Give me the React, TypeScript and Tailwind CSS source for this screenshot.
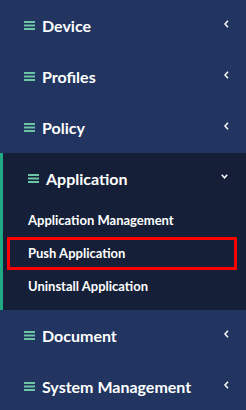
import React from "react";

interface MenuItem {
  label: string;
  open?: boolean;
  children?: string[];
}

const MENU: MenuItem[] = [
  { label: "Device" },
  { label: "Profiles" },
  { label: "Policy" },
  {
    label: "Application",
    open: true,
    children: ["Application Management", "Push Application", "Uninstall Application"],
  },
  { label: "Document" },
  { label: "System Management" },
];

function BarsIcon() {
  return (
    <svg width="11" height="9" viewBox="0 0 11 9" className="shrink-0">
      <rect x="0" y="0" width="11" height="2" fill="#6cc5a4" />
      <rect x="0" y="3.5" width="11" height="2" fill="#6cc5a4" />
      <rect x="0" y="7" width="11" height="2" fill="#6cc5a4" />
    </svg>
  );
}

function Chevron({ open }: { open?: boolean }) {
  if (open) {
    return (
      <svg width="7" height="5" viewBox="0 0 7 5" className="absolute right-[18px] top-[21px]">
        <polyline points="0.8,0.8 3.5,3.8 6.2,0.8" fill="none" stroke="#fff" strokeWidth="1.5" />
      </svg>
    );
  }
  return (
    <svg width="5" height="8" viewBox="0 0 5 8" className="absolute right-[17px] top-[20px]">
      <polyline points="4,0.8 1,4 4,7.2" fill="none" stroke="#fff" strokeWidth="1.5" />
    </svg>
  );
}

export default function App() {
  return (
    <div
      className="w-[246px] h-[410px] overflow-hidden bg-[#213560] text-white"
      style={{ fontFamily: "Lato, 'Noto Sans', sans-serif" }}
    >
      {MENU.map((item) =>
        item.open ? (
          <div key={item.label} className="bg-[#151f38] border-l-[3px] border-[#1fa985] pb-[7px]">
            <div className="relative h-[51px] flex items-center pl-[25px] gap-[7px]">
              <BarsIcon />
              <span className="text-[16px] font-bold">{item.label}</span>
              <Chevron open />
            </div>
            {item.children?.map((child) => (
              <div
                key={child}
                className={
                  "h-[33px] flex items-center text-[13px] font-bold " +
                  (child === "Push Application"
                    ? "ml-[4px] mr-[9px] border-[3px] border-[#ff0000] pl-[18px]"
                    : "pl-[25px]")
                }
              >
                {child}
              </div>
            ))}
          </div>
        ) : (
          <div key={item.label} className="relative h-[51px] flex items-center pl-[24px] gap-[7px]">
            <BarsIcon />
            <span className="text-[16px] font-bold">{item.label}</span>
            <Chevron />
          </div>
        )
      )}
    </div>
  );
}
